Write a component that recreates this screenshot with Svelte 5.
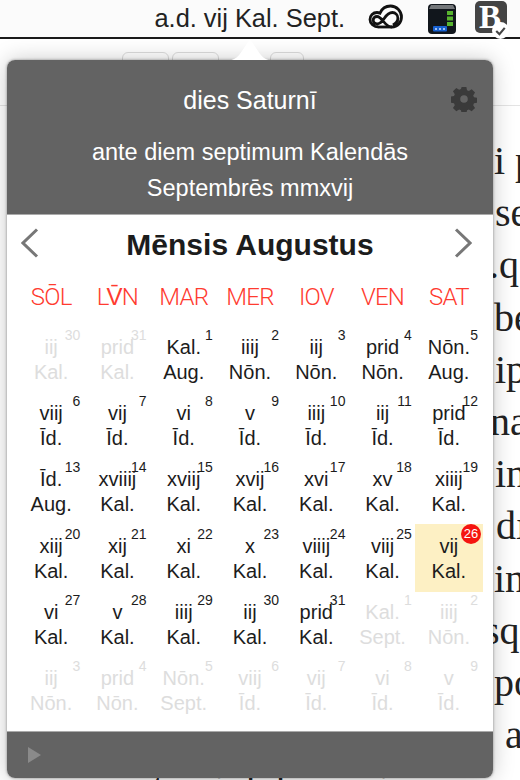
<script>
const dows = ["SŌL", "LV̄N", "MAR", "MER", "IOV", "VEN", "SAT"];

// [top line, bottom line, day number, muted]
const days = [
  ["iij", "Kal.", 30, true], ["prid", "Kal.", 31, true], ["Kal.", "Aug.", 1], ["iiij", "Nōn.", 2], ["iij", "Nōn.", 3], ["prid", "Nōn.", 4], ["Nōn.", "Aug.", 5],
  ["viij", "Īd.", 6], ["vij", "Īd.", 7], ["vi", "Īd.", 8], ["v", "Īd.", 9], ["iiij", "Īd.", 10], ["iij", "Īd.", 11], ["prid", "Īd.", 12],
  ["Īd.", "Aug.", 13], ["xviiij", "Kal.", 14], ["xviij", "Kal.", 15], ["xvij", "Kal.", 16], ["xvi", "Kal.", 17], ["xv", "Kal.", 18], ["xiiij", "Kal.", 19],
  ["xiij", "Kal.", 20], ["xij", "Kal.", 21], ["xi", "Kal.", 22], ["x", "Kal.", 23], ["viiij", "Kal.", 24], ["viij", "Kal.", 25], ["vij", "Kal.", 26],
  ["vi", "Kal.", 27], ["v", "Kal.", 28], ["iiij", "Kal.", 29], ["iij", "Kal.", 30], ["prid", "Kal.", 31], ["Kal.", "Sept.", 1, true], ["iiij", "Nōn.", 2, true],
  ["iij", "Nōn.", 3, true], ["prid", "Nōn.", 4, true], ["Nōn.", "Sept.", 5, true], ["viij", "Īd.", 6, true], ["vij", "Īd.", 7, true], ["vi", "Īd.", 8, true], ["v", "Īd.", 9, true]
];

// the document behind the popover: [text, left offset]
const pageLines = [
  ["i p", 494], ["se", 495], [".q", 489], ["be", 494], ["ip", 495], ["na", 490], ["in", 495],
  ["dı", 496], ["in", 494], ["sq", 484], ["po", 494], ["a", 505], ["et qui dolorem ipsum quia dolor", 135]
];
</script>

<div class="screen">
  <header class="menubar">
    <span class="clock">a.d. vij Kal. Sept.</span>
    <svg class="ccloud" width="36" height="26" viewBox="0 0 36 26">
      <path d="M11 24C5.500 24 2 20.500 2 16.500 2 12.500 5 9.500 9 9.500c1 0 2 .2 3 .6C14 5.500 18 3 22.500 3 28.500 3 33.500 8 33.500 14c0 5.500-4 10-9.500 10-4 0-6.500-3-8.500-5.500-2-2.500-4-5-6.500-5-2.200 0-3.800 1.600-3.800 3.600s1.700 3.700 4 3.700c3 0 5-2.300 7-5.300 2-3 4.300-6 8.200-6 3 0 5.500 2.500 5.500 5.500s-2 5.500-5 7" fill="none" stroke="#111" stroke-width="2.800"/>
      <path d="M11 24h13" fill="none" stroke="#111" stroke-width="2.800"/>
    </svg>
    <svg class="disk" width="30" height="30" viewBox="0 0 30 30">
      <rect x="1" y="0" width="28" height="30" rx="4" fill="#11161c"/>
      <path d="M4 1h22l2 4H2z" fill="#74777a"/>
      <rect x="20" y="7" width="6" height="4" fill="#58b52f"/>
      <rect x="20" y="12.500" width="6" height="4" fill="#58b52f"/>
      <rect x="20" y="18" width="6" height="4" fill="#58b52f"/>
      <rect x="6" y="22" width="14" height="5.500" rx="1" fill="#1760d0"/>
      <circle cx="9" cy="25" r="1" fill="#cfe0ff"/><circle cx="13" cy="25" r="1" fill="#cfe0ff"/><circle cx="17" cy="25" r="1" fill="#cfe0ff"/>
    </svg>
    <div class="bibicon">
      <span class="bibletter">B</span>
      <svg class="check" width="17" height="17" viewBox="0 0 16 16">
        <circle cx="8" cy="8" r="8" fill="#fff"/>
        <path d="M4 8.500l3 3 5-6" fill="none" stroke="#444" stroke-width="2"/>
      </svg>
    </div>
  </header>

  <div class="toolbar">
    <span></span><span></span><span class="last"></span>
  </div>

  <div class="page">
    {#each pageLines as l}
      <div class="pageline" style="padding-left: {l[1]}px">{l[0]}</div>
    {/each}
  </div>

  <div class="popover">
    <svg class="arrow" width="50" height="22" viewBox="0 0 50 22">
      <path d="M0 22C10 22 14 17 18 10.500L25 0l7 10.500C36 17 40 22 50 22z" fill="#fff"/>
    </svg>
    <div class="top">
      <div class="dayname">dies Saturnī</div>
      <svg class="gear" width="26" height="26" viewBox="0 0 24 24">
        <path fill="#3a3a3a" fill-rule="evenodd" d="M9.800 1h4.400l.6 3 1.700.7 2.600-1.700 3.100 3.100-1.700 2.600.7 1.700 3 .6v4.400l-3 .6-.7 1.700 1.700 2.600-3.100 3.100-2.600-1.700-1.700.7-.6 3H9.800l-.6-3-1.700-.7-2.600 1.700-3.100-3.100 1.700-2.600-.7-1.700-3-.6V9.800l3-.6.7-1.700-1.700-2.600L4.900 1.800l2.600 1.700 1.700-.7zM12 8.500a3.500 3.500 0 1 0 0 7 3.500 3.500 0 0 0 0-7z"/>
      </svg>
      <div class="fulldate">ante diem septimum Kalendās<br>Septembrēs mmxvij</div>
    </div>

    <div class="monthbar">
      <svg class="prev" width="18" height="30" viewBox="0 0 18 30"><path d="M16 1.500L2 15l14 13.500" fill="none" stroke="#777" stroke-width="3"/></svg>
      <h1>Mēnsis Augustus</h1>
      <svg class="next" width="18" height="30" viewBox="0 0 18 30"><path d="M2 1.500L16 15 2 28.500" fill="none" stroke="#777" stroke-width="3"/></svg>
    </div>

    <div class="grid">
      {#each dows as d}
        <div class="dow">{d}</div>
      {/each}
      {#each days as day, i}
        <div class="cell" class:muted={day[3]} class:today={i === 27}>
          <span class="num">{day[2]}</span>
          <span>{day[0]}</span>
          <span>{day[1]}</span>
        </div>
      {/each}
    </div>

    <div class="foot">
      <svg width="16" height="18" viewBox="0 0 16 18"><path d="M1 1l13 8-13 8z" fill="#8a8a8a"/></svg>
    </div>
  </div>
</div>

<style>
:global(body) {
  margin: 0;
  background: #fff;
}

.screen {
  width: 520px;
  height: 780px;
  position: relative;
  overflow: hidden;
  font-family: "Liberation Sans", Arial, sans-serif;
}

.menubar {
  height: 37px;
  background: #fbfbfb;
  border-bottom: 2px solid #1a1a1a;
  display: flex;
  align-items: center;
  justify-content: flex-end;
  padding-right: 13px;
}

.clock {
  font-size: 25.4px;
  color: #222;
  margin-right: 23px;
}

.ccloud {
  margin-right: 23px;
  margin-top: -5px;
}

.disk {
  margin-right: 18px;
}

.bibicon {
  width: 32px;
  height: 32px;
  margin-top: -4px;
  background: #444;
  border-radius: 5px;
  position: relative;
  text-align: center;
}

.bibletter {
  font-family: "Liberation Serif", serif;
  font-weight: bold;
  font-size: 33px;
  line-height: 32px;
  color: #fff;
  margin-left: -2px;
  display: inline-block;
}

.check {
  position: absolute;
  right: -2px;
  bottom: -6px;
}

.toolbar {
  height: 53px;
  padding-top: 13px;
  border-bottom: 1px solid #e4e4e4;
  display: flex;
  padding-left: 122px;
  gap: 3px;
}

.toolbar span {
  width: 45px;
  height: 20px;
  border: 1px solid #ddd;
  border-radius: 6px;
}

.toolbar .last {
  margin-left: 48px;
  width: 32px;
}

.page {
  margin-top: 29px;
  font-family: "Liberation Serif", serif;
  font-size: 40px;
  color: #222;
}

.pageline {
  height: 52.2px;
  line-height: 52.2px;
  white-space: nowrap;
}

.popover {
  position: absolute;
  left: 7px;
  top: 60px;
  width: 486px;
  height: 718px;
  border-radius: 8px;
  background: #fff;
  box-shadow: 0 0 3px rgba(0, 0, 0, 0.4), 0 0 22px rgba(0, 0, 0, 0.22);
  display: flex;
  flex-direction: column;
}

.arrow {
  position: absolute;
  left: 218px;
  top: -21px;
}

.top {
  height: 155px;
  background: #636363;
  border-radius: 8px 8px 0 0;
  color: #fff;
  text-align: center;
  position: relative;
  font-size: 23.5px;
  flex: none;
  border-bottom: 1px solid #aaa;
  box-sizing: border-box;
}

.dayname {
  padding-top: 26px;
  line-height: 28px;
  font-size: 25px;
}

.fulldate {
  margin-top: 20px;
  line-height: 36px;
}

.gear {
  position: absolute;
  right: 16px;
  top: 26px;
}

.monthbar {
  height: 57px;
  display: grid;
  grid-template-columns: 1fr auto 1fr;
  align-items: center;
  padding: 0 14px;
  flex: none;
}

.monthbar svg {
  margin-top: -2px;
}

.monthbar .next {
  justify-self: end;
  margin-right: 7px;
}

.monthbar h1 {
  margin: 0;
  padding-top: 2px;
  font-size: 30px;
  font-weight: bold;
  color: #1c1c1c;
}

.grid {
  display: grid;
  grid-template-columns: repeat(7, 1fr);
  grid-template-rows: 55px;
  grid-auto-rows: 66.2px;
  padding: 0 11px;
  flex: none;
}

.dow {
  color: #ff3b30;
  font-family: Roboto, "Liberation Sans", sans-serif;
  font-size: 24px;
  letter-spacing: -0.8px;
  font-weight: 300;
  text-align: center;
  line-height: 50px;
}

.cell {
  position: relative;
  display: flex;
  flex-direction: column;
  align-items: center;
  justify-content: center;
  font-size: 20px;
  line-height: 25px;
  color: #1c1c1c;
}

.num {
  position: absolute;
  right: 4px;
  top: 0;
  font-size: 14px;
  line-height: 16px;
}

.muted {
  color: #ddd;
}

.today {
  background: #fdf0c4;
  margin: -2px -1px 0;
  padding-top: 2px;
}

.today .num {
  right: 2px;
  top: 0;
  width: 20px;
  height: 20px;
  border-radius: 50%;
  background: #f5140f;
  color: #fff;
  text-align: center;
  line-height: 20px;
  font-size: 13px;
}

.foot {
  margin-top: auto;
  height: 46px;
  background: #636363;
  border-radius: 0 0 8px 8px;
  border-top: 1px solid #aaa;
  display: flex;
  align-items: center;
  padding-left: 20px;
  flex: none;
}
</style>
